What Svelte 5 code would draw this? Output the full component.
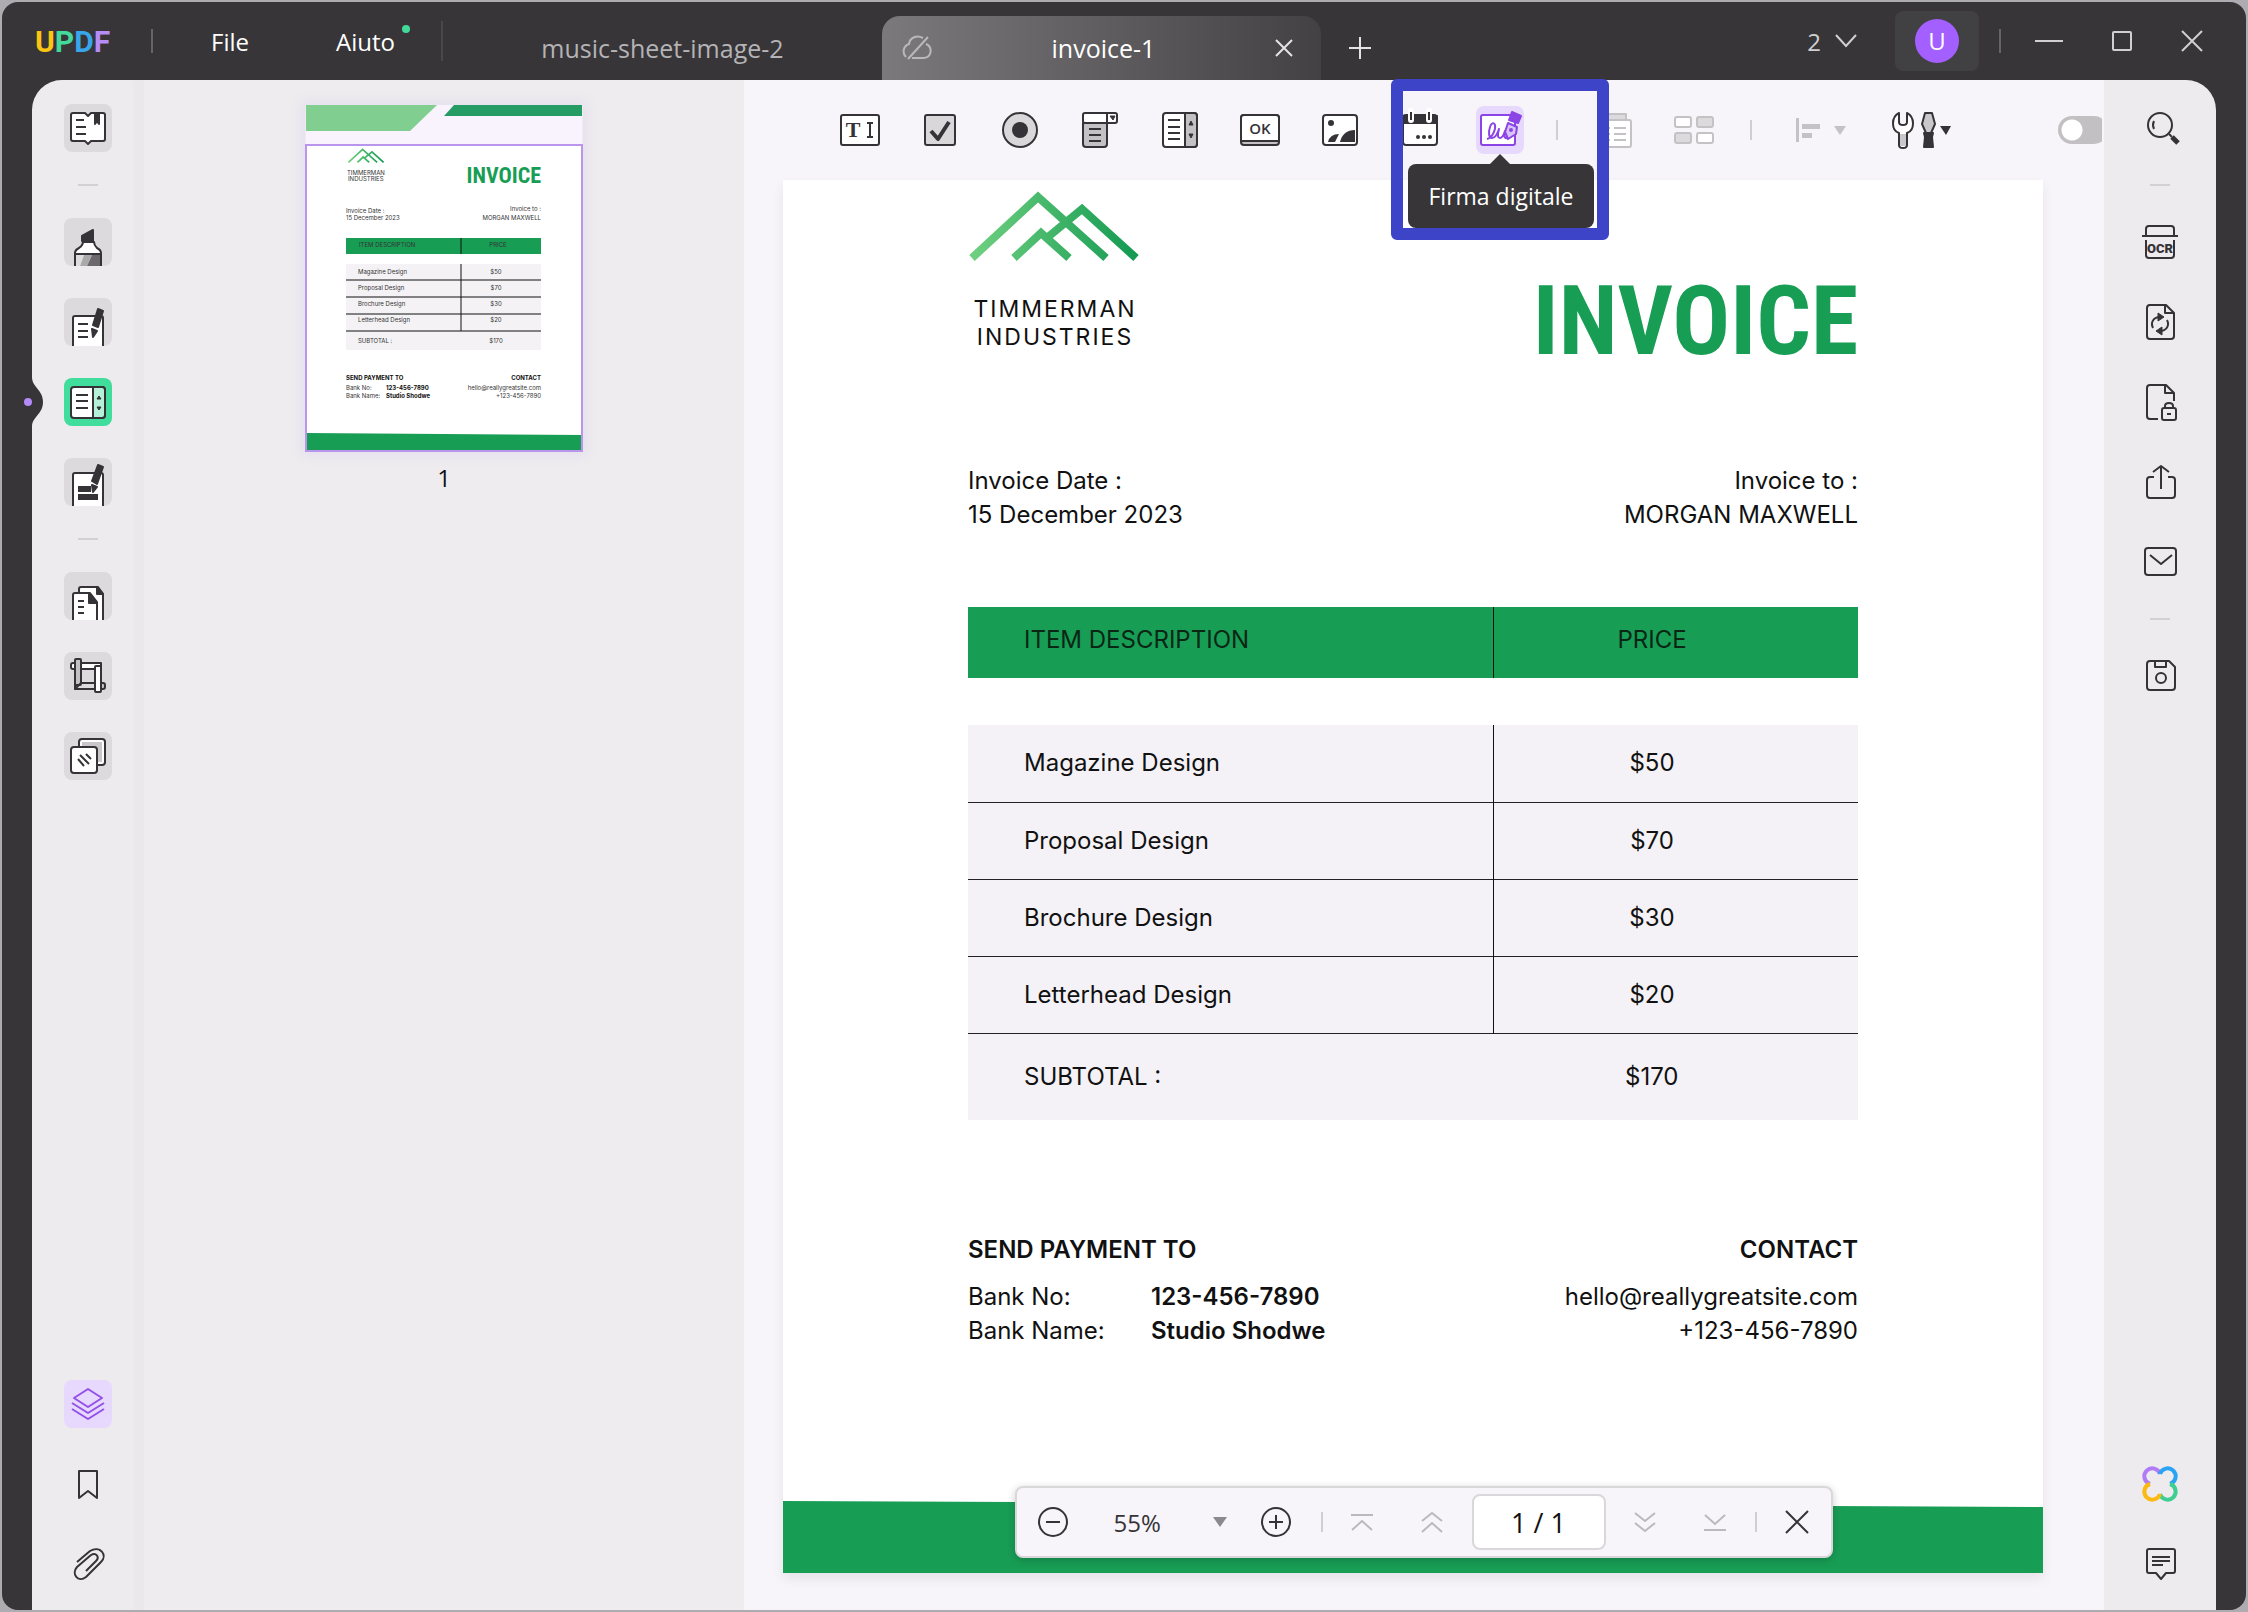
<script>
    const ink = "#353337";

    // every icon is drawn on a 48 x 48 grid
    const icons = {
        book: `<path d="M9 9h12l3 3 3-3h12q2 0 2 2v24q0 2-2 2H27l-3 3-3-3H9q-2 0-2-2V11q0-2 2-2z" fill="#fff"/><path d="M12 16h8M12 23h10M12 30h10"/><path d="M31 9v11l2-3 2 3V9z" fill="${ink}"/>`,
        marker: `<path d="M18 23v-5l11-6v11z" fill="${ink}"/><path d="M11 50V35q0-3 4-5 4-3 4-6h11q0 3 3 6 4 2 4 5v15z" fill="#fff"/><path d="M12 37h8l-4 11h-4z" fill="#ddd" stroke="none"/><path d="M20 37h8l-5 11h-7z" fill="#aaa" stroke="none"/><path d="M28 37h8v11H23z" fill="#6b696c" stroke="none"/><path d="M11 36h26"/>`,
        edit: `<path d="M9 50V20q0-2 2-2h26q2 0 2 2v30" fill="#fff"/><path d="M14 26h10M14 33h10M14 39h10"/><path d="M34 11l5 2-5 16-5-2zM28 31l5 2-4 6z" fill="${ink}"/>`,
        form: `<rect x="7" y="9" width="34" height="31" rx="3" fill="#fff"/><path d="M29 9h9q3 0 3 3v25q0 3-3 3h-9z" fill="#b4f1d6"/><path d="M12 17h12M12 23h12M12 30h12"/><path d="M33 21l2-3 2 3zM33 29l2 3 2-3z" fill="${ink}" stroke-width="1"/>`,
        sign: `<path d="M9 50V17q0-2 2-2h26q2 0 2 2v33" fill="#fff"/><path d="M14 28h13v6H14zM14 36h20v6H14z" fill="${ink}" stroke="none"/><path d="M34 7l5 2-6 17-5-3zM28 27l5 2-4 5z" fill="${ink}"/>`,
        pages: `<path d="M15 50V17q0-2 2-2h17l5 7v28" fill="#fff"/><path d="M33 15l6 7h-6z" fill="${ink}"/><path d="M9 50V23q0-2 2-2h15l7 9v20" fill="#fff"/><path d="M25 21l8 10h-8z" fill="${ink}"/><path d="M14 29h6M14 35h6M14 41h6"/>`,
        crop: `<rect x="7" y="11" width="6" height="6" rx="2" fill="#fff"/><rect x="34" y="31" width="7" height="6" rx="2" fill="#c3c1c4"/><path d="M11 11h26v26H11z" fill="#fff"/><path d="M17 17h14v14H17z" fill="#dcdadd"/><path d="M11 31h20v6H11z" fill="#dcdadd"/><rect x="11" y="7" width="6" height="26" rx="1" fill="#c3c1c4"/><rect x="31" y="14" width="6" height="26" rx="1" fill="#fff"/><path d="M11 37l6-6"/>`,
        layers2: `<rect x="15" y="7" width="26" height="26" rx="3" fill="#fff"/><rect x="18" y="10" width="20" height="20" fill="#c9c7ca" stroke="none"/><rect x="7" y="15" width="26" height="26" rx="3" fill="#fff"/><path d="M14 27l6 7M16 23l9 9M22 22l5 5"/>`,
        stack: `<g stroke="#9450e8"><path d="M24 9l14 9-14 9-14-9z"/><path d="M8 23l16 10 16-10M8 29l16 10 16-10"/></g>`,
        bookmark: `<path d="M15 11h18v27l-9-7-9 7z"/>`,
        clip: `<path d="M13 22L26 11c10-6 18 4 11 11L22 37c-8 6-15-3-9-10l14-12c5-3 9 2 5 6L22 31"/>`,
        search: `<circle cx="24" cy="21" r="12"/><path d="M18 17q-2 4 0 8"/><path d="M33 30l3 3" stroke-width="2"/><path d="M36 33l6 6" stroke-width="5"/>`,
        ocr: `<path d="M10 17v-6q0-3 3-3h22q3 0 3 3v6M6 18h36M10 22v15q0 3 3 3h22q3 0 3-3V22"/><text x="24" y="35" text-anchor="middle" font-family="Roboto, sans-serif" font-size="13" font-weight="900" fill="${ink}" stroke="none">OCR</text>`,
        convert: `<path d="M13 7h17l8 8v23q0 3-3 3H14q-3 0-3-3V10q0-3 3-3zM29 7v8h9"/><path d="M17 30c-3-6 1-11 7-11M31 22c3 6-1 11-7 11"/><path d="M22 15l6 4-6 4zM26 29l-6 4 6 4z" fill="${ink}" stroke-width="1"/>`,
        lock: `<path d="M22 41h-8q-3 0-3-3V10q0-3 3-3h16l8 8v8M29 7v8h9"/><rect x="26" y="30" width="14" height="12" rx="2"/><path d="M29 30v-2q0-3 4-3t4 3v2M31 36h4"/>`,
        share: `<path d="M18 19h-4q-3 0-3 3v15q0 3 3 3h22q3 0 3-3V22q0-3-3-3h-4M25 31V8M17 14l8-6 8 6"/>`,
        mail: `<rect x="9" y="10" width="31" height="27" rx="3"/><path d="M14 17l11 9 11-9"/>`,
        save: `<path d="M14 9h19l6 6v20q0 3-3 3H14q-3 0-3-3V12q0-3 3-3zM19 9v6h11V9"/><circle cx="25" cy="26" r="5"/>`,
        ai: `<g stroke-width="4"><path d="M14 24A8 8 0 1 1 24 14" stroke="#b07bf5"/><path d="M24 14A8 8 0 1 1 34 24" stroke="#2aa3f2"/><path d="M34 24A8 8 0 1 1 24 34" stroke="#3fce92"/><path d="M24 34A8 8 0 1 1 14 24" stroke="#fbb911"/></g>`,
        comment: `<path d="M13 9h24q2 0 2 2v20q0 2-2 2h-7l-5 6-5-6h-7q-2 0-2-2V11q0-2 2-2zM16 17h18M16 21h18M16 25h11"/>`,
        textField: `<rect x="5" y="9" width="38" height="30" rx="2" fill="#fff"/><text x="17" y="31" text-anchor="middle" font-family="Liberation Serif, serif" font-size="22" font-weight="700" fill="${ink}" stroke="none">T</text><path d="M31 17h6M34 17v14M31 31h6"/>`,
        checkField: `<rect x="9" y="9" width="30" height="30" rx="2" fill="#d9d7da"/><path d="M15 25l7 8 11-17" stroke-width="4"/>`,
        radioField: `<circle cx="24" cy="24" r="17" fill="#d9d7da"/><circle cx="24" cy="24" r="8" fill="${ink}" stroke="none"/>`,
        comboField: `<rect x="7" y="7" width="34" height="10" rx="2" fill="#fff"/><path d="M7 17h24v21q0 3-3 3H10q-3 0-3-3z" fill="#c3c1c4"/><path d="M31 7v10M13 23h12M13 29h12M13 35h12"/><path d="M34 10h5l-2 4z" fill="${ink}" stroke-width="1"/>`,
        listField: `<rect x="7" y="7" width="34" height="34" rx="3" fill="#fff"/><path d="M29 7h9q3 0 3 3v28q0 3-3 3h-9z" fill="#c3c1c4"/><path d="M12 14h12M12 21h12M12 27h12M12 33h12"/><path d="M33 19l2-4 2 4zM33 28l2 4 2-4z" fill="${ink}" stroke-width="1"/>`,
        okField: `<rect x="5" y="9" width="38" height="30" rx="3" fill="#c3c1c4"/><path d="M8 9h32q3 0 3 3v23H5V12q0-3 3-3z" fill="#fff"/><text x="24" y="28" text-anchor="middle" font-family="Open Sans, sans-serif" font-size="15" font-weight="600" fill="${ink}" stroke="none">OK</text>`,
        imageField: `<rect x="7" y="9" width="34" height="30" rx="3" fill="#fff"/><circle cx="15" cy="17" r="3" fill="${ink}" stroke="none"/><path d="M12 36q2-8 11-8l-4 8zM24 36q3-12 15-12v12z" fill="${ink}" stroke="none"/>`,
        dateField: `<rect x="7" y="9" width="34" height="30" rx="3" fill="#fff"/><path d="M7 10h34v7H7z" fill="${ink}"/><path d="M15 5v9M33 5v9" stroke="#fff" stroke-width="6" stroke-linecap="round"/><path d="M15 6v8M33 6v8"/><g fill="${ink}" stroke="none"><circle cx="22" cy="31" r="2"/><circle cx="28" cy="31" r="2"/><circle cx="34" cy="31" r="2"/></g>`,
        signField: `<g stroke="#8b45e6"><rect x="5" y="9" width="34" height="30" rx="2" fill="#fff"/><path d="M11 33c5-1 9-9 8-14-1-3-4-2-5 2-2 6-1 11 2 11 4 0 6-6 7-9-2 7-1 9 1 9s4-4 5-7c-2 6 0 8 4 7"/><path d="M36 6l9 4-3 7-9-3z" fill="#8b45e6"/><path d="M32 17l9 4-1 7-8 5-3-7z" fill="#d9c4fa"/><circle cx="35" cy="24" r="1" fill="#8b45e6"/></g>`,
        copyField: `<g stroke="#c4c2c5"><path d="M13 13V8h23v6" fill="#dcdadd"/><rect x="11" y="14" width="30" height="27" rx="2" fill="#fff"/><path d="M17 22h3M24 22h12M17 28h3M24 28h12M17 34h3M24 34h12"/></g>`,
        gridField: `<g stroke="#c4c2c5"><rect x="5" y="11" width="16" height="10" rx="2" fill="#fff"/><rect x="27" y="11" width="16" height="10" rx="2" fill="#dcdadd"/><rect x="5" y="27" width="16" height="10" rx="2" fill="#dcdadd"/><rect x="27" y="27" width="16" height="10" rx="2" fill="#fff"/></g>`,
    };

    const leftTop = [
        ["book", "Reader"],
        null,
        ["marker", "Comment"],
        ["edit", "Edit PDF"],
        ["form", "Form"],
        ["sign", "Fill and sign"],
        null,
        ["pages", "Organize pages"],
        ["crop", "Crop pages"],
        ["layers2", "Watermark"],
    ];
    const leftBottom = [
        ["stack", "Thumbnails"],
        ["bookmark", "Bookmarks"],
        ["clip", "Attachments"],
    ];
    const rightTop = [
        ["search", "Search"],
        null,
        ["ocr", "OCR"],
        ["convert", "Convert"],
        ["lock", "Protect"],
        ["share", "Share"],
        ["mail", "Email"],
        null,
        ["save", "Save"],
    ];
    const rightBottom = [
        ["ai", "AI"],
        ["comment", "Comments"],
    ];
    const fields = [
        ["textField", "Text field"],
        ["checkField", "Check box"],
        ["radioField", "Radio button"],
        ["comboField", "Dropdown"],
        ["listField", "List box"],
        ["okField", "Button"],
        ["imageField", "Image"],
        ["dateField", "Date"],
    ];

    const rows = [
        ["Magazine Design", "$50"],
        ["Proposal Design", "$70"],
        ["Brochure Design", "$30"],
        ["Letterhead Design", "$20"],
    ];

    let current = $state("form");
    let zoom = $state("55%");
    let page = $state("1 / 1");
</script>

{#snippet icon(name)}
    <svg class="icon" viewBox="0 0 48 48" fill="none" stroke={ink} stroke-width="2" stroke-linejoin="round">
        {@html icons[name]}
    </svg>
{/snippet}

{#snippet mountains()}
    <path d="M4 67L70 6L138 67M46 67L73 42L101 67M80 46L114 18L168 67" fill="none" stroke="url(#peak)" stroke-width="8" />
{/snippet}

<div class="window">
    <header>
        <strong class="brand"><span class="u">U</span><span class="p">P</span><span class="d">D</span><span class="f">F</span></strong>
        <i class="bar"></i>
        <button class="menu file">File</button>
        <button class="menu help">Aiuto<span class="dot"></span></button>
        <i class="bar tall"></i>
        <button class="tab idle">music-sheet-image-2</button>
        <div class="tab active">
            <svg width="30" height="26" viewBox="0 0 30 26" fill="none" stroke="#b9b8ba" stroke-width="2">
                <path d="M21 3C15 0 8 2 7 9C1 11 0 18 4 22M24 9c7 3 6 14-3 14H10M26 2L6 24" />
            </svg>
            <span>invoice-1</span>
            <button aria-label="Close tab">
                <svg width="18" height="18" viewBox="0 0 18 18" stroke="#e4e3e5" stroke-width="2"><path d="M1 1l16 16M17 1L1 17" /></svg>
            </button>
        </div>
        <button class="plus" aria-label="New tab">
            <svg width="22" height="22" viewBox="0 0 22 22" stroke="#e4e3e5" stroke-width="2"><path d="M11 0v22M0 11h22" /></svg>
        </button>
        <div class="controls">
            <button class="count">
                2
                <svg width="22" height="14" viewBox="0 0 22 14" fill="none" stroke="#d0cfd1" stroke-width="2"><path d="M1 1l10 11L21 1" /></svg>
            </button>
            <button class="account"><span>U</span></button>
            <i class="bar"></i>
            <button class="win" aria-label="Minimize">
                <svg width="28" height="22" viewBox="0 0 28 22" stroke="#d0cfd1" stroke-width="2"><path d="M0 11h28" /></svg>
            </button>
            <button class="win" aria-label="Maximize">
                <svg width="22" height="22" viewBox="0 0 22 22" fill="none" stroke="#d0cfd1" stroke-width="2"><rect x="2" y="2" width="18" height="18" rx="1" /></svg>
            </button>
            <button class="win" aria-label="Close">
                <svg width="22" height="22" viewBox="0 0 22 22" stroke="#d0cfd1" stroke-width="2"><path d="M1 1l20 20M21 1L1 21" /></svg>
            </button>
        </div>
    </header>

    <div class="body">
        <svg class="bump" width="24" height="48" viewBox="0 0 24 48">
            <path d="M8 0C9 10 19 12 19 24S9 38 8 48z" fill="#373538" />
            <circle cx="4" cy="24" r="4" fill="#b48af8" />
        </svg>

        <nav class="rail left">
            {#each leftTop as item}
                {#if item}
                    <button class="tile" class:on={item[0] === current} aria-label={item[1]} onclick={() => (current = item[0])}>
                        {@render icon(item[0])}
                    </button>
                {:else}
                    <i class="dash"></i>
                {/if}
            {/each}
            <span class="fill"></span>
            {#each leftBottom as item, i}
                <button class="tile plain" class:lilac={i === 0} aria-label={item[1]}>{@render icon(item[0])}</button>
            {/each}
        </nav>

        <aside>
            <button class="thumb" aria-label="Page 1">
                <svg class="sheet" viewBox="0 0 278 347" font-family="Inter, sans-serif" font-size="6" fill="#333">
                    <defs>
                        <linearGradient id="peak" x1="0" x2="1">
                            <stop offset="0" stop-color="#6fd080" />
                            <stop offset="1" stop-color="#149a52" />
                        </linearGradient>
                    </defs>
                    <rect x="1" width="276" height="347" fill="#f8f3fd" />
                    <path d="M1 0h131l-27 26H1z" fill="#80cf90" />
                    <path d="M149 0h128v11H139z" fill="#259c63" />
                    <rect x="1" y="40" width="276" height="306" fill="#fff" />
                    <path d="M1 328l276 2v16H1z" fill="#189d55" />
                    <rect x="1" y="40" width="276" height="306" fill="none" stroke="#b995ec" stroke-width="2" />
                    <svg x="42" y="43" width="38" height="15" viewBox="0 0 172 70">{@render mountains()}</svg>
                    <text x="42" y="70">TIMMERMAN</text>
                    <text x="43" y="76">INDUSTRIES</text>
                    <text x="236" y="78" class="mini-title" text-anchor="end" fill="#189d55">INVOICE</text>
                    <text x="41" y="108">Invoice Date :</text>
                    <text x="41" y="115">15 December 2023</text>
                    <text x="236" y="106" text-anchor="end">Invoice to :</text>
                    <text x="236" y="115" text-anchor="end">MORGAN MAXWELL</text>
                    <path d="M41 133h195v16H41z" fill="#189d55" />
                    <text x="54" y="142">ITEM DESCRIPTION</text>
                    <text x="193" y="142" text-anchor="middle">PRICE</text>
                    <path d="M41 159h195v86H41z" fill="#f4f2f5" />
                    {#each rows as row, i}
                        <text x="53" y={169 + i * 16}>{row[0]}</text>
                        <text x="191" y={169 + i * 16} text-anchor="middle">{row[1]}</text>
                    {/each}
                    <text x="53" y="238">SUBTOTAL :</text>
                    <text x="191" y="238" text-anchor="middle">$170</text>
                    <path d="M156 133v16M156 159v67M41 175h195M41 192h195M41 209h195M41 226h195" stroke="#111" />
                    <g font-weight="700" fill="#111">
                        <text x="41" y="275">SEND PAYMENT TO</text>
                        <text x="236" y="275" text-anchor="end">CONTACT</text>
                        <text x="81" y="285">123-456-7890</text>
                        <text x="81" y="293">Studio Shodwe</text>
                    </g>
                    <text x="41" y="285">Bank No:</text>
                    <text x="41" y="293">Bank Name:</text>
                    <text x="236" y="285" text-anchor="end">hello@reallygreatsite.com</text>
                    <text x="236" y="293" text-anchor="end">+123-456-7890</text>
                </svg>
            </button>
            <span class="number">1</span>
        </aside>

        <main>
            <div class="tools">
                {#each fields as field}
                    <button class="tool" aria-label={field[1]}>{@render icon(field[0])}</button>
                {/each}
                <div class="signature">
                    <button class="tool chosen" aria-label="Firma digitale">{@render icon("signField")}</button>
                    <div class="highlight"></div>
                    <div class="tooltip" role="tooltip">Firma digitale</div>
                </div>
                <i class="sep"></i>
                <button class="tool" aria-label="Duplicate">{@render icon("copyField")}</button>
                <button class="tool" aria-label="Tab order">{@render icon("gridField")}</button>
                <i class="sep"></i>
                <button class="tool align" aria-label="Align">
                    <svg width="68" height="48" viewBox="0 0 68 48" fill="#c4c2c5">
                        <path d="M12 12h3v24h-3zM18 18h18v5H18zM18 27h10v5H18zM50 20h12l-6 9z" />
                    </svg>
                </button>
                <button class="tool preset" aria-label="Tools">
                    <svg width="72" height="48" viewBox="0 0 72 48" fill="#fff" stroke={ink} stroke-width="2" stroke-linejoin="round">
                        <path d="M15 7c-8 4-8 17 0 20v12q0 3 4 3t4-3V27c8-3 8-16 0-20v9q0 3-4 3t-4-3z" />
                        <path d="M16 28h6v12h-6z" fill="#c9c7ca" stroke="none" />
                        <path d="M41 7h7l3 11-4 9h-5l-4-9z" fill="#c9c7ca" />
                        <path d="M40 27h9l-1 4 1 10h-9l1-10z" fill={ink} />
                        <path d="M56 20h11l-5 9z" fill={ink} stroke="none" />
                    </svg>
                </button>
                <label class="toggle"><input type="checkbox" role="switch" aria-label="Preview" /></label>
            </div>

            <div class="view">
                <article class="paper">
                    <section class="head">
                        <div class="company">
                            <svg width="172" height="72" viewBox="0 0 172 72">{@render mountains()}</svg>
                            <p>TIMMERMAN<br />INDUSTRIES</p>
                        </div>
                        <h1>INVOICE</h1>
                    </section>
                    <section class="meta">
                        <p>Invoice Date :<br />15 December 2023</p>
                        <p class="to">Invoice to :<br />MORGAN MAXWELL</p>
                    </section>
                    <table>
                        <thead>
                            <tr><th>ITEM DESCRIPTION</th><th>PRICE</th></tr>
                        </thead>
                        <tbody>
                            <tr class="gap"><td colspan="2"></td></tr>
                            {#each rows as row}
                                <tr class="item"><td>{row[0]}</td><td>{row[1]}</td></tr>
                            {/each}
                            <tr class="total"><td>SUBTOTAL :</td><td>$170</td></tr>
                        </tbody>
                    </table>
                    <section class="pay">
                        <div>
                            <h2>SEND PAYMENT TO</h2>
                            <dl>
                                <dt>Bank No:</dt><dd>123-456-7890</dd>
                                <dt>Bank Name:</dt><dd>Studio Shodwe</dd>
                            </dl>
                        </div>
                        <div class="contact">
                            <h2>CONTACT</h2>
                            <p>hello@reallygreatsite.com<br />+123-456-7890</p>
                        </div>
                    </section>
                    <div class="band"></div>
                </article>
            </div>

            <div class="pager">
                <button aria-label="Zoom out">
                    <svg width="32" height="32" viewBox="0 0 32 32" fill="none" stroke={ink} stroke-width="2"><circle cx="16" cy="16" r="14" /><path d="M9 16h14" /></svg>
                </button>
                <label class="zoom">
                    <select bind:value={zoom} aria-label="Zoom"><option>55%</option><option>100%</option></select>
                    <svg width="14" height="10" viewBox="0 0 14 10" fill="#8b898c"><path d="M0 0h14L7 10z" /></svg>
                </label>
                <button aria-label="Zoom in">
                    <svg width="32" height="32" viewBox="0 0 32 32" fill="none" stroke={ink} stroke-width="2"><circle cx="16" cy="16" r="14" /><path d="M9 16h14M16 9v14" /></svg>
                </button>
                <i class="sep"></i>
                <div class="pair">
                    <button aria-label="First page">
                        <svg width="22" height="22" viewBox="0 0 22 22" fill="none" stroke="#bbb9bc" stroke-width="2"><path d="M0 4h22M1 19l10-9 10 9" /></svg>
                    </button>
                    <button aria-label="Previous page">
                        <svg width="22" height="22" viewBox="0 0 22 22" fill="none" stroke="#bbb9bc" stroke-width="2"><path d="M1 10l10-8 10 8M1 21l10-9 10 9" /></svg>
                    </button>
                </div>
                <input class="pageno" bind:value={page} aria-label="Page" />
                <div class="pair">
                    <button aria-label="Next page">
                        <svg width="22" height="22" viewBox="0 0 22 22" fill="none" stroke="#bbb9bc" stroke-width="2"><path d="M1 2l10 8 10-8M1 12l10 8 10-8" /></svg>
                    </button>
                    <button aria-label="Last page">
                        <svg width="22" height="22" viewBox="0 0 22 22" fill="none" stroke="#bbb9bc" stroke-width="2"><path d="M0 19h22M1 4l10 9 10-9" /></svg>
                    </button>
                </div>
                <i class="sep"></i>
                <button aria-label="Hide">
                    <svg width="24" height="24" viewBox="0 0 24 24" fill="none" stroke={ink} stroke-width="2"><path d="M1 1l22 22M23 1L1 23" /></svg>
                </button>
            </div>
        </main>

        <nav class="rail right">
            {#each rightTop as item}
                {#if item}
                    <button class="tile plain" aria-label={item[1]}>{@render icon(item[0])}</button>
                {:else}
                    <i class="dash"></i>
                {/if}
            {/each}
            <span class="fill"></span>
            {#each rightBottom as item}
                <button class="tile plain" aria-label={item[1]}>{@render icon(item[0])}</button>
            {/each}
        </nav>
    </div>
</div>

<style>
    :global(body) {
        margin: 0;
        background: #aeacb0;
    }

    .window {
        box-sizing: border-box;
        min-height: 100vh;
        border: 2px solid #aeacb0;
        border-radius: 18px;
        background: #373538;
        display: flex;
        flex-direction: column;
        font-family: "Open Sans", "Noto Sans", sans-serif;
        font-size: 24px;
        color: #353337;
    }

    button, input, select {
        font: inherit;
        color: inherit;
        background: none;
        border: none;
        padding: 0;
        margin: 0;
    }

    button {
        display: flex;
        align-items: center;
        justify-content: center;
        cursor: pointer;
    }

    svg {
        display: block;
        flex: none;
    }

    .icon {
        width: 48px;
        height: 48px;
    }

    /* title bar */
    header {
        height: 78px;
        display: flex;
        align-items: center;
        color: #fff;
    }

    .brand {
        width: 82px;
        margin-left: 33px;
        font-family: Roboto, sans-serif;
        font-size: 30px;
        font-weight: 700;
    }

    .u { color: #fbc512; }
    .p { color: #42d99b; }
    .d { color: #38a6ea; }
    .f { color: #b68cf6; }

    .bar {
        width: 2px;
        height: 24px;
        margin-left: 34px;
        background: #656366;
    }

    .bar.tall {
        height: 40px;
        margin-left: 46px;
        background: #49474a;
    }

    .menu {
        position: relative;
    }

    .file {
        margin-left: 58px;
    }

    .help {
        margin-left: 87px;
    }

    .dot {
        position: absolute;
        top: 0;
        right: -15px;
        width: 8px;
        height: 8px;
        border-radius: 50%;
        background: #42d99b;
    }

    .tab {
        align-self: flex-end;
        width: 439px;
        height: 64px;
        box-sizing: border-box;
        font-size: 25px;
    }

    .idle {
        color: #b4b3b5;
    }

    .active {
        display: flex;
        align-items: center;
        justify-content: space-between;
        padding: 0 28px 0 20px;
        border-radius: 18px 18px 0 0;
        background: linear-gradient(90deg, #7b797c, #434144);
    }

    .plus {
        margin-left: 28px;
        padding-top: 14px;
    }

    .controls {
        margin-left: auto;
        display: flex;
        align-items: center;
        gap: 48px;
        padding-right: 43px;
    }

    .controls .bar {
        margin: 0 -14px 0 -28px;
    }

    .count {
        gap: 14px;
        margin-right: -10px;
        color: #d0cfd1;
    }

    .account {
        width: 84px;
        height: 60px;
        border-radius: 8px;
        background: #414042;
    }

    .account span {
        width: 44px;
        line-height: 44px;
        border-radius: 50%;
        background: #a35fff;
        color: #fff;
    }

    /* body */
    .body {
        position: relative;
        flex: 1;
        display: flex;
        margin: 0 30px;
    }

    .bump {
        position: absolute;
        left: -8px;
        top: 298px;
        z-index: 2;
    }

    .rail {
        flex: none;
        width: 112px;
        box-sizing: border-box;
        padding: 24px 0 22px;
        display: flex;
        flex-direction: column;
        align-items: center;
        gap: 32px;
        background: #edebee;
    }

    .left {
        border-radius: 30px 0 0 0;
        box-shadow: inset -10px 0 2px #eae8eb;
    }

    .right {
        border-radius: 0 30px 0 0;
    }

    .tile {
        width: 48px;
        height: 48px;
        border-radius: 8px;
        background: #dcdadd;
        overflow: hidden;
    }

    .plain {
        background: none;
    }

    .on {
        background: #40dd9c;
    }

    .lilac {
        background: #e6d9fd;
    }

    .dash {
        width: 20px;
        height: 2px;
        background: #d2d0d3;
    }

    .fill {
        flex: 1;
    }

    aside {
        flex: none;
        width: 600px;
        display: flex;
        flex-direction: column;
        align-items: center;
        background: #efecef;
    }

    .thumb {
        width: 278px;
        margin-top: 25px;
        box-shadow: 0 0 12px 4px #e4e0ee;
    }

    .sheet {
        width: 100%;
    }

    .mini-title {
        font: 700 22px "Liberation Sans Narrow", "Roboto Condensed", Roboto, sans-serif;
    }

    .number {
        margin-top: 9px;
        color: #111;
    }

    main {
        position: relative;
        flex: 1;
        min-width: 0;
        display: flex;
        flex-direction: column;
        background: #f7f5f9;
    }

    .tools {
        height: 100px;
        display: flex;
        align-items: center;
        gap: 32px;
        padding-left: 92px;
        position: relative;
        z-index: 1;
    }

    .tool {
        width: 48px;
        height: 48px;
        border-radius: 8px;
        flex: none;
    }

    .chosen {
        background: #e6d9fd;
    }

    .align {
        width: 68px;
    }

    .preset {
        width: 72px;
    }

    .sep {
        flex: none;
        width: 2px;
        height: 20px;
        background: #d0ced1;
    }

    .signature {
        position: relative;
        z-index: 2;
    }

    .highlight {
        position: absolute;
        left: -85px;
        top: -27px;
        width: 194px;
        height: 137px;
        border: 12px solid #3d44c8;
        border-radius: 6px;
    }

    .tooltip {
        position: absolute;
        left: -68px;
        top: 58px;
        width: 186px;
        line-height: 64px;
        border-radius: 8px;
        background: #373538;
        color: #fff;
        font-size: 23px;
        text-align: center;
    }

    .tooltip::before {
        content: "";
        position: absolute;
        left: 81px;
        top: -10px;
        border: 11px solid transparent;
        border-top: 0;
        border-bottom-color: #373538;
    }

    .toggle {
        width: 44px;
        margin-left: auto;
        margin-right: 2px;
        overflow: hidden;
    }

    .toggle input {
        appearance: none;
        display: block;
        width: 50px;
        height: 28px;
        border-radius: 14px;
        background: radial-gradient(circle at 14px 14px, #fff 10px, #c2c0c3 11px);
    }

    .view {
        flex: 1;
        padding: 0 61px 37px 39px;
    }

    .paper {
        box-sizing: border-box;
        height: 100%;
        padding: 11px 185px 0;
        position: relative;
        display: flex;
        flex-direction: column;
        background: #fff;
        box-shadow: 0 6px 10px #e6e4e8;
        font-family: Inter, sans-serif;
        font-size: 24px;
        line-height: 34px;
        color: #111;
    }

    p, h1, h2, dl, dd {
        margin: 0;
    }

    .head {
        display: flex;
        justify-content: space-between;
        height: 269px;
    }

    .company {
        width: 174px;
        text-align: center;
    }

    .company p {
        margin-top: 32px;
        font-size: 23px;
        line-height: 28px;
        letter-spacing: 2px;
    }

    h1 {
        margin-top: 72px;
        font: 700 96px/116px "Liberation Sans Narrow", "Roboto Condensed", Roboto, sans-serif;
        color: #189d55;
    }

    .meta {
        display: flex;
        justify-content: space-between;
        height: 147px;
        padding-top: 4px;
        box-sizing: border-box;
    }

    .to {
        text-align: right;
    }

    table {
        width: 100%;
        border-collapse: collapse;
        table-layout: fixed;
    }

    th, td {
        padding: 0 0 0 56px;
        text-align: left;
        font-weight: 400;
    }

    th:first-child, .item td:first-child {
        border-right: 1px solid #111;
    }

    th:first-child {
        width: 469px;
    }

    th:last-child, td:last-child {
        padding: 0 48px 0 0;
        text-align: center;
    }

    thead tr {
        height: 71px;
        background: #189d55;
    }

    thead th, thead th:last-child {
        padding-bottom: 6px;
        color: #0a2614;
    }

    .gap {
        height: 47px;
    }

    .item {
        height: 77px;
        background: #f4f2f6;
        border-bottom: 1px solid #222;
    }

    .total {
        height: 87px;
        background: #f4f2f6;
    }

    .pay {
        display: flex;
        justify-content: space-between;
        margin-top: 113px;
    }

    h2 {
        margin-bottom: 13px;
        font-size: 24px;
        font-weight: 600;
    }

    dl {
        display: grid;
        grid-template-columns: 183px auto;
    }

    dd {
        font-weight: 600;
    }

    .contact {
        text-align: right;
    }

    .band {
        height: 72px;
        margin: auto -185px 0;
        background: #189d55;
        clip-path: polygon(0 0, 100% 6px, 100% 100%, 0 100%);
    }

    /* floating zoom and page bar */
    .pager {
        position: absolute;
        left: 0;
        right: 0;
        bottom: 52px;
        width: 818px;
        height: 72px;
        box-sizing: border-box;
        margin: 0 auto;
        padding: 0 22px 0 20px;
        display: flex;
        align-items: center;
        justify-content: space-between;
        border: 2px solid #d9d7da;
        border-radius: 8px;
        background: #f7f5f9;
        box-shadow: 0 2px 8px #0003;
    }

    .zoom {
        position: relative;
        width: 134px;
        display: flex;
        align-items: center;
    }

    .zoom select {
        appearance: none;
        width: 100%;
        padding-left: 16px;
    }

    .zoom svg {
        position: absolute;
        right: 5px;
        pointer-events: none;
    }

    .pair {
        display: flex;
        gap: 48px;
    }

    .pageno {
        width: 134px;
        height: 56px;
        box-sizing: border-box;
        border: 2px solid #d9d7da;
        border-radius: 8px;
        background: #fff;
        text-align: center;
        font-size: 27px;
        color: #111;
    }
</style>
